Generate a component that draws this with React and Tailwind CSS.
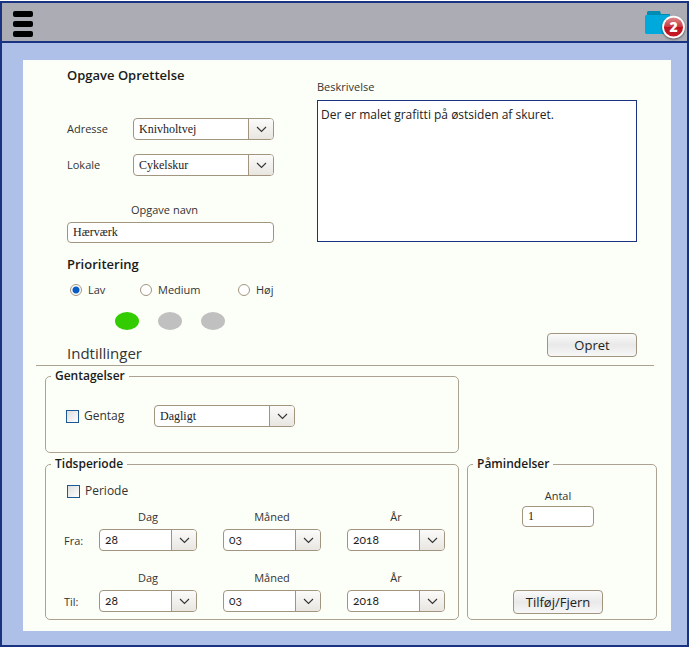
import React from "react";

const labelCls = "font-['Open_Sans',sans-serif] text-[11px] leading-5 text-[#333333]";
const headCls = "font-['Open_Sans',sans-serif] leading-5 font-semibold text-[#1a1a1a]";

function Chevron() {
  return (
    <span className="pointer-events-none absolute inset-y-px right-px flex w-6 items-center justify-center rounded-r-[3px] border-l border-[#a29580] bg-linear-to-b from-[#fbfbfa] to-[#e9e6e1] box-content">
      <svg width="11" height="7" viewBox="0 0 11 7" fill="none" stroke="#333333" strokeWidth="1.1">
        <path d="M1 1 L5.5 5.5 L10 1" />
      </svg>
    </span>
  );
}

function Select({ id, label, options, className, textClass }) {
  return (
    <span className={`relative block h-[22px] ${className}`}>
      <select
        id={id}
        aria-label={label}
        className={`block h-full w-full appearance-none rounded-[4px] border border-[#a29580] bg-white pr-7 pl-[5px] text-[#222222] outline-none ${textClass}`}
      >
        {options.map((o) => (
          <option key={o}>{o}</option>
        ))}
      </select>
      <Chevron />
    </span>
  );
}

const serif = "font-['Liberation_Serif',serif] text-[12px]";
const figures = "font-['Lato',sans-serif] text-[12px] oldstyle-nums";

function DateRow({ name, id }) {
  const fields = [
    ["Dag", ["28"]],
    ["Måned", ["03"]],
    ["År", ["2018"]],
  ];
  return (
    <div className="flex items-end pl-[13px]">
      <span className={`${labelCls} w-[35px] shrink-0`}>{name}</span>
      <div className="flex gap-[26px]">
        {fields.map(([label, options]) => (
          <div key={label} className="w-[98px]">
            <label htmlFor={id + label} className={`${labelCls} block text-center`}>
              {label}
            </label>
            <Select id={id + label} options={options} className="mt-[2px]" textClass={figures} />
          </div>
        ))}
      </div>
    </div>
  );
}

function Check({ id, label }) {
  return (
    <div className="flex items-center gap-[5px]">
      <input
        id={id}
        type="checkbox"
        className="size-[13px] appearance-none border border-[#1d5a94] bg-linear-to-br from-[#dedede] to-white checked:bg-[#1d5a94]"
      />
      <label htmlFor={id} className="font-['Open_Sans',sans-serif] text-[12px] leading-5 text-[#333333]">
        {label}
      </label>
    </div>
  );
}

function Group({ title, className, children }) {
  return (
    <fieldset className={`min-w-0 rounded-[5px] border border-[#aca291] px-[5px] ${className}`}>
      <legend className={`${headCls} px-1 text-[12px]`}>{title}</legend>
      {children}
    </fieldset>
  );
}

function Radio({ id, label, checked, className = "" }) {
  return (
    <div className={`flex items-center gap-[6px] ${className}`}>
      <input
        id={id}
        type="radio"
        name="prioritet"
        defaultChecked={checked}
        className="size-3 appearance-none rounded-full border border-[#a29580] bg-white checked:bg-[radial-gradient(circle,#0a5cc4_3px,#ffffff_4px)]"
      />
      <label htmlFor={id} className={labelCls}>
        {label}
      </label>
    </div>
  );
}

const buttonCls =
  "h-6 w-[90px] rounded-[4px] border border-[#a29580] bg-linear-to-b from-[#fafafa] via-[#e9e9e9] to-[#f7f7f7] font-['Open_Sans',sans-serif] text-[13px] leading-5 text-[#222222]";

function Folder() {
  return (
    <svg width="42" height="38" viewBox="0 0 42 38">
      <defs>
        <linearGradient id="badge" x1="0" y1="0" x2="0" y2="1">
          <stop offset="0" stopColor="#dd8a8c" />
          <stop offset="0.48" stopColor="#c93a42" />
          <stop offset="0.52" stopColor="#bd1220" />
          <stop offset="1" stopColor="#c61a28" />
        </linearGradient>
        <filter id="shade" x="-30%" y="-30%" width="160%" height="160%">
          <feDropShadow dx="0" dy="1" stdDeviation="1" floodColor="#000000" floodOpacity="0.6" />
        </filter>
      </defs>
      <path d="M2 16 V9 L3 8 H15 L16 11 H25 V16 Z" fill="#008bb2" />
      <path d="M0 13 L1 12 H25 V31 H1 L0 30 Z" fill="#00a9dc" />
      <circle cx="28.5" cy="24" r="11.3" fill="#ffffff" filter="url(#shade)" />
      <circle cx="28.5" cy="24" r="9.6" fill="url(#badge)" />
      <text x="28.5" y="29" textAnchor="middle" fill="#ffffff" fontFamily="Open Sans, sans-serif" fontWeight="800" fontSize="14">
        2
      </text>
    </svg>
  );
}

export default function App() {
  return (
    <div className="flex min-h-screen flex-col bg-white py-px">
      <div className="flex flex-1 flex-col border-2 border-[#1a3380] bg-[#aec0e8]">
        <header className="flex h-10 items-center justify-between border-b-2 border-[#1a3380] bg-[#acacb5] pl-[11px]">
          <button type="button" aria-label="Menu" className="flex flex-col gap-1 pt-1">
            <span className="h-[6px] w-5 rounded-[2px] bg-black" />
            <span className="h-[6px] w-5 rounded-[2px] bg-black" />
            <span className="h-[6px] w-5 rounded-[2px] bg-black" />
          </button>
          <button type="button" aria-label="Opgaver">
            <Folder />
          </button>
        </header>

        <main className="flex-1 pt-[17px] pr-4 pb-[14px] pl-[21px]">
          <form className="bg-[#fcfff8] pb-[11px]">
            <div className="flex gap-[43px] pt-[5px] pr-[34px] pl-11">
              <div className="w-[207px] shrink-0">
                <h1 className={`${headCls} text-[13px]`}>Opgave Oprettelse</h1>
                <div className="mt-[33px] flex items-center justify-between">
                  <label htmlFor="adresse" className={labelCls}>Adresse</label>
                  <Select id="adresse" options={["Knivholtvej"]} className="w-[141px]" textClass={serif} />
                </div>
                <div className="mt-[14px] flex items-center justify-between">
                  <label htmlFor="lokale" className={labelCls}>Lokale</label>
                  <Select id="lokale" options={["Cykelskur"]} className="w-[141px]" textClass={serif} />
                </div>
                <label htmlFor="navn" className={`${labelCls} mt-6 block pl-16`}>Opgave navn</label>
                <input
                  id="navn"
                  defaultValue="Hærværk"
                  className={`mt-[2px] block h-[21px] w-full rounded-[4px] border border-[#a29580] bg-white px-[5px] text-[#222222] ${serif}`}
                />
                <h2 className={`${headCls} mt-[11px] text-[13px]`}>Prioritering</h2>
                <div className="mt-[6px] flex pl-[3px]">
                  <Radio id="lav" label="Lav" checked className="w-[70px]" />
                  <Radio id="medium" label="Medium" className="w-[98px]" />
                  <Radio id="hoj" label="Høj" />
                </div>
                <div className="mt-3 flex gap-[19px] pl-12">
                  <span className="h-[18px] w-6 rounded-[50%] bg-[#33cc00]" />
                  <span className="h-[18px] w-6 rounded-[50%] bg-[#c0c0c0]" />
                  <span className="h-[18px] w-6 rounded-[50%] bg-[#c0c0c0]" />
                </div>
                <h2 className="mt-[13px] font-['Open_Sans',sans-serif] text-[15px] leading-5 text-[#333333]">
                  Indtillinger
                </h2>
              </div>

              <div className="flex min-w-0 flex-1 flex-col pt-3">
                <label htmlFor="beskrivelse" className={labelCls}>Beskrivelse</label>
                <textarea
                  id="beskrivelse"
                  defaultValue="Der er malet grafitti på østsiden af skuret."
                  className="mt-[3px] block h-[142px] w-full resize-none border border-[#1a3380] bg-white px-[3px] py-1 font-['Open_Sans',sans-serif] text-[12px] leading-5 text-[#222222]"
                />
                <button type="button" className={`${buttonCls} mt-auto mb-[6px] self-end`}>Opret</button>
              </div>
            </div>

            <hr className="mt-[2px] mr-[17px] ml-[13px] border-[#aca291]" />

            <div className="grid grid-cols-[414fr_190fr] gap-x-2 gap-y-px pr-[14px] pl-[22px]">
              <Group title="Gentagelser" className="col-start-1 pb-[25px]">
                <div className="flex items-center pt-[19px] pl-[15px]">
                  <div className="w-[88px]">
                    <Check id="gentag" label="Gentag" />
                  </div>
                  <Select id="interval" label="Interval" options={["Dagligt"]} className="w-[141px]" textClass={serif} />
                </div>
              </Group>

              <Group title="Tidsperiode" className="col-start-1 pb-[7px]">
                <div className="pt-[7px] pb-[6px] pl-4">
                  <Check id="periode" label="Periode" />
                </div>
                <DateRow name="Fra:" id="fra" />
                <div className="mt-[17px]">
                  <DateRow name="Til:" id="til" />
                </div>
              </Group>

              <Group title="Påmindelser" className="pb-[5px]">
                <div className="flex h-full flex-col items-center pt-3 pr-2">
                  <label htmlFor="antal" className={labelCls}>Antal</label>
                  <input
                    id="antal"
                    defaultValue="1"
                    className={`block h-[21px] w-[72px] rounded-[4px] border border-[#a29580] bg-white px-[5px] text-[#222222] ${serif}`}
                  />
                  <button type="button" className={`${buttonCls} mt-auto`}>Tilføj/Fjern</button>
                </div>
              </Group>
            </div>
          </form>
        </main>
      </div>
    </div>
  );
}
